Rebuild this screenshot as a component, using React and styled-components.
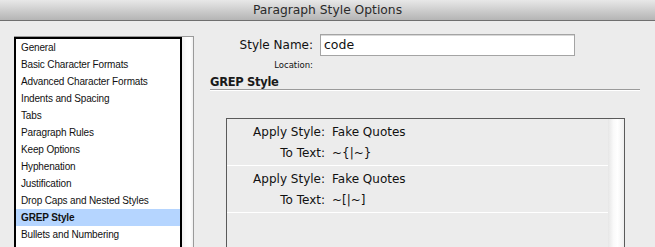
import React from 'react'
import styled, { createGlobalStyle } from 'styled-components'

const GlobalStyle = createGlobalStyle`
  html, body {
    margin: 0;
    padding: 0;
    background: #ececec;
    overflow: hidden;
  }
  body {
    font-family: "DejaVu Sans", "Liberation Sans", sans-serif;
    color: #111;
  }
`

const Window = styled.div`
  width: 655px;
  height: 247px;
  display: flex;
  flex-direction: column;
  background: #ececec;
  overflow: hidden;
`

const TitleBar = styled.div`
  height: 20px;
  flex: none;
  display: flex;
  align-items: center;
  justify-content: center;
  background: linear-gradient(#e8e8e8, #c9c9c9 60%, #b5b5b5);
  border-bottom: 1px solid #6f6f6f;
  font-size: 12.3px;
  color: #2a2a2a;
`

const Body = styled.div`
  flex: 1;
  display: flex;
  padding-top: 13px;
`

const Sidebar = styled.div`
  margin: 2px 0 0 14px;
  width: 179px;
  flex: none;
  display: flex;
  border-top: 1px solid #9a9a9a;
  border-right: 1px solid #9a9a9a;
`

const List = styled.ul`
  list-style: none;
  margin: 0;
  padding: 0;
  width: 164px;
  border: 2px solid #000;
  border-bottom: 0;
  background: #fff;
  font-family: "Liberation Sans", Arial, sans-serif;
  font-size: 10px;
  letter-spacing: -0.15px;
`

const Item = styled.li`
  height: 17px;
  line-height: 17px;
  padding-left: 5px;
  white-space: nowrap;
  background: ${p => (p.selected ? '#b5d5ff' : 'transparent')};
  font-weight: ${p => (p.selected ? 'bold' : 'normal')};
`

const Track = styled.div`
  flex: 1;
  background: linear-gradient(90deg, #f2f2f2, #fdfdfd 40%, #ffffff 70%, #f0f0f0);
`

const Main = styled.div`
  flex: 1;
  display: flex;
  flex-direction: column;
  padding: 0 15px 0 16px;
`

const NameRow = styled.div`
  display: grid;
  grid-template-columns: 103px 255px;
  column-gap: 7px;
  align-items: center;
`

const Label = styled.span`
  text-align: right;
  font-size: ${p => p.size || 12}px;
  white-space: nowrap;
`

const Input = styled.div`
  height: 20px;
  border: 1px solid #a4a4a4;
  box-shadow: inset 0 1px 0 #d8d8d8;
  background: #fff;
  font-size: 12.5px;
  line-height: 20px;
  padding-left: 3px;
`

const LocationRow = styled(NameRow)`
  margin-top: 2px;
  height: 14px;
`

const Heading = styled.div`
  margin-top: 4px;
  font-size: 11.5px;
  font-weight: bold;
  letter-spacing: -0.3px;
  line-height: 13px;
  border-bottom: 1px solid #9a9a9a;
  box-shadow: 0 1px 0 #fff;
  color: #1a1a1a;
`

const Panel = styled.div`
  margin: 28px 15px 0 16px;
  flex: 1;
  display: flex;
  border: 1px solid #5a5a5a;
  border-bottom: 0;
`

const Rules = styled.div`
  flex: 1;
`

const Rule = styled.div`
  height: 44px;
  padding-top: 2px;
  border-bottom: 1px solid #fff;
  display: grid;
  grid-template-columns: 98px 1fr;
  grid-auto-rows: 21px;
  column-gap: 7px;
  align-items: center;
  font-size: 12px;
`

const Value = styled.span`
  white-space: nowrap;
`

const PanelTrack = styled.div`
  width: 16px;
  background: linear-gradient(90deg, #e6e6e6, #fafafa 35%, #ffffff 60%, #efefef);
`

const items = [
  'General',
  'Basic Character Formats',
  'Advanced Character Formats',
  'Indents and Spacing',
  'Tabs',
  'Paragraph Rules',
  'Keep Options',
  'Hyphenation',
  'Justification',
  'Drop Caps and Nested Styles',
  'GREP Style',
  'Bullets and Numbering',
]

const rules = [
  { style: 'Fake Quotes', text: '~{|~}' },
  { style: 'Fake Quotes', text: '~[|~]' },
]

export default function App() {
  return (
    <Window>
      <GlobalStyle />
      <TitleBar>Paragraph Style Options</TitleBar>
      <Body>
        <Sidebar>
          <List>
            {items.map(name => (
              <Item key={name} selected={name === 'GREP Style'}>
                {name}
              </Item>
            ))}
          </List>
          <Track />
        </Sidebar>
        <Main>
          <NameRow>
            <Label>Style Name:</Label>
            <Input>code</Input>
          </NameRow>
          <LocationRow>
            <Label size={8.5}>Location:</Label>
            <span />
          </LocationRow>
          <Heading>GREP Style</Heading>
          <Panel>
            <Rules>
              {rules.map((r, i) => (
                <Rule key={i}>
                  <Label>Apply Style:</Label>
                  <Value>{r.style}</Value>
                  <Label>To Text:</Label>
                  <Value>{r.text}</Value>
                </Rule>
              ))}
            </Rules>
            <PanelTrack />
          </Panel>
        </Main>
      </Body>
    </Window>
  )
}
